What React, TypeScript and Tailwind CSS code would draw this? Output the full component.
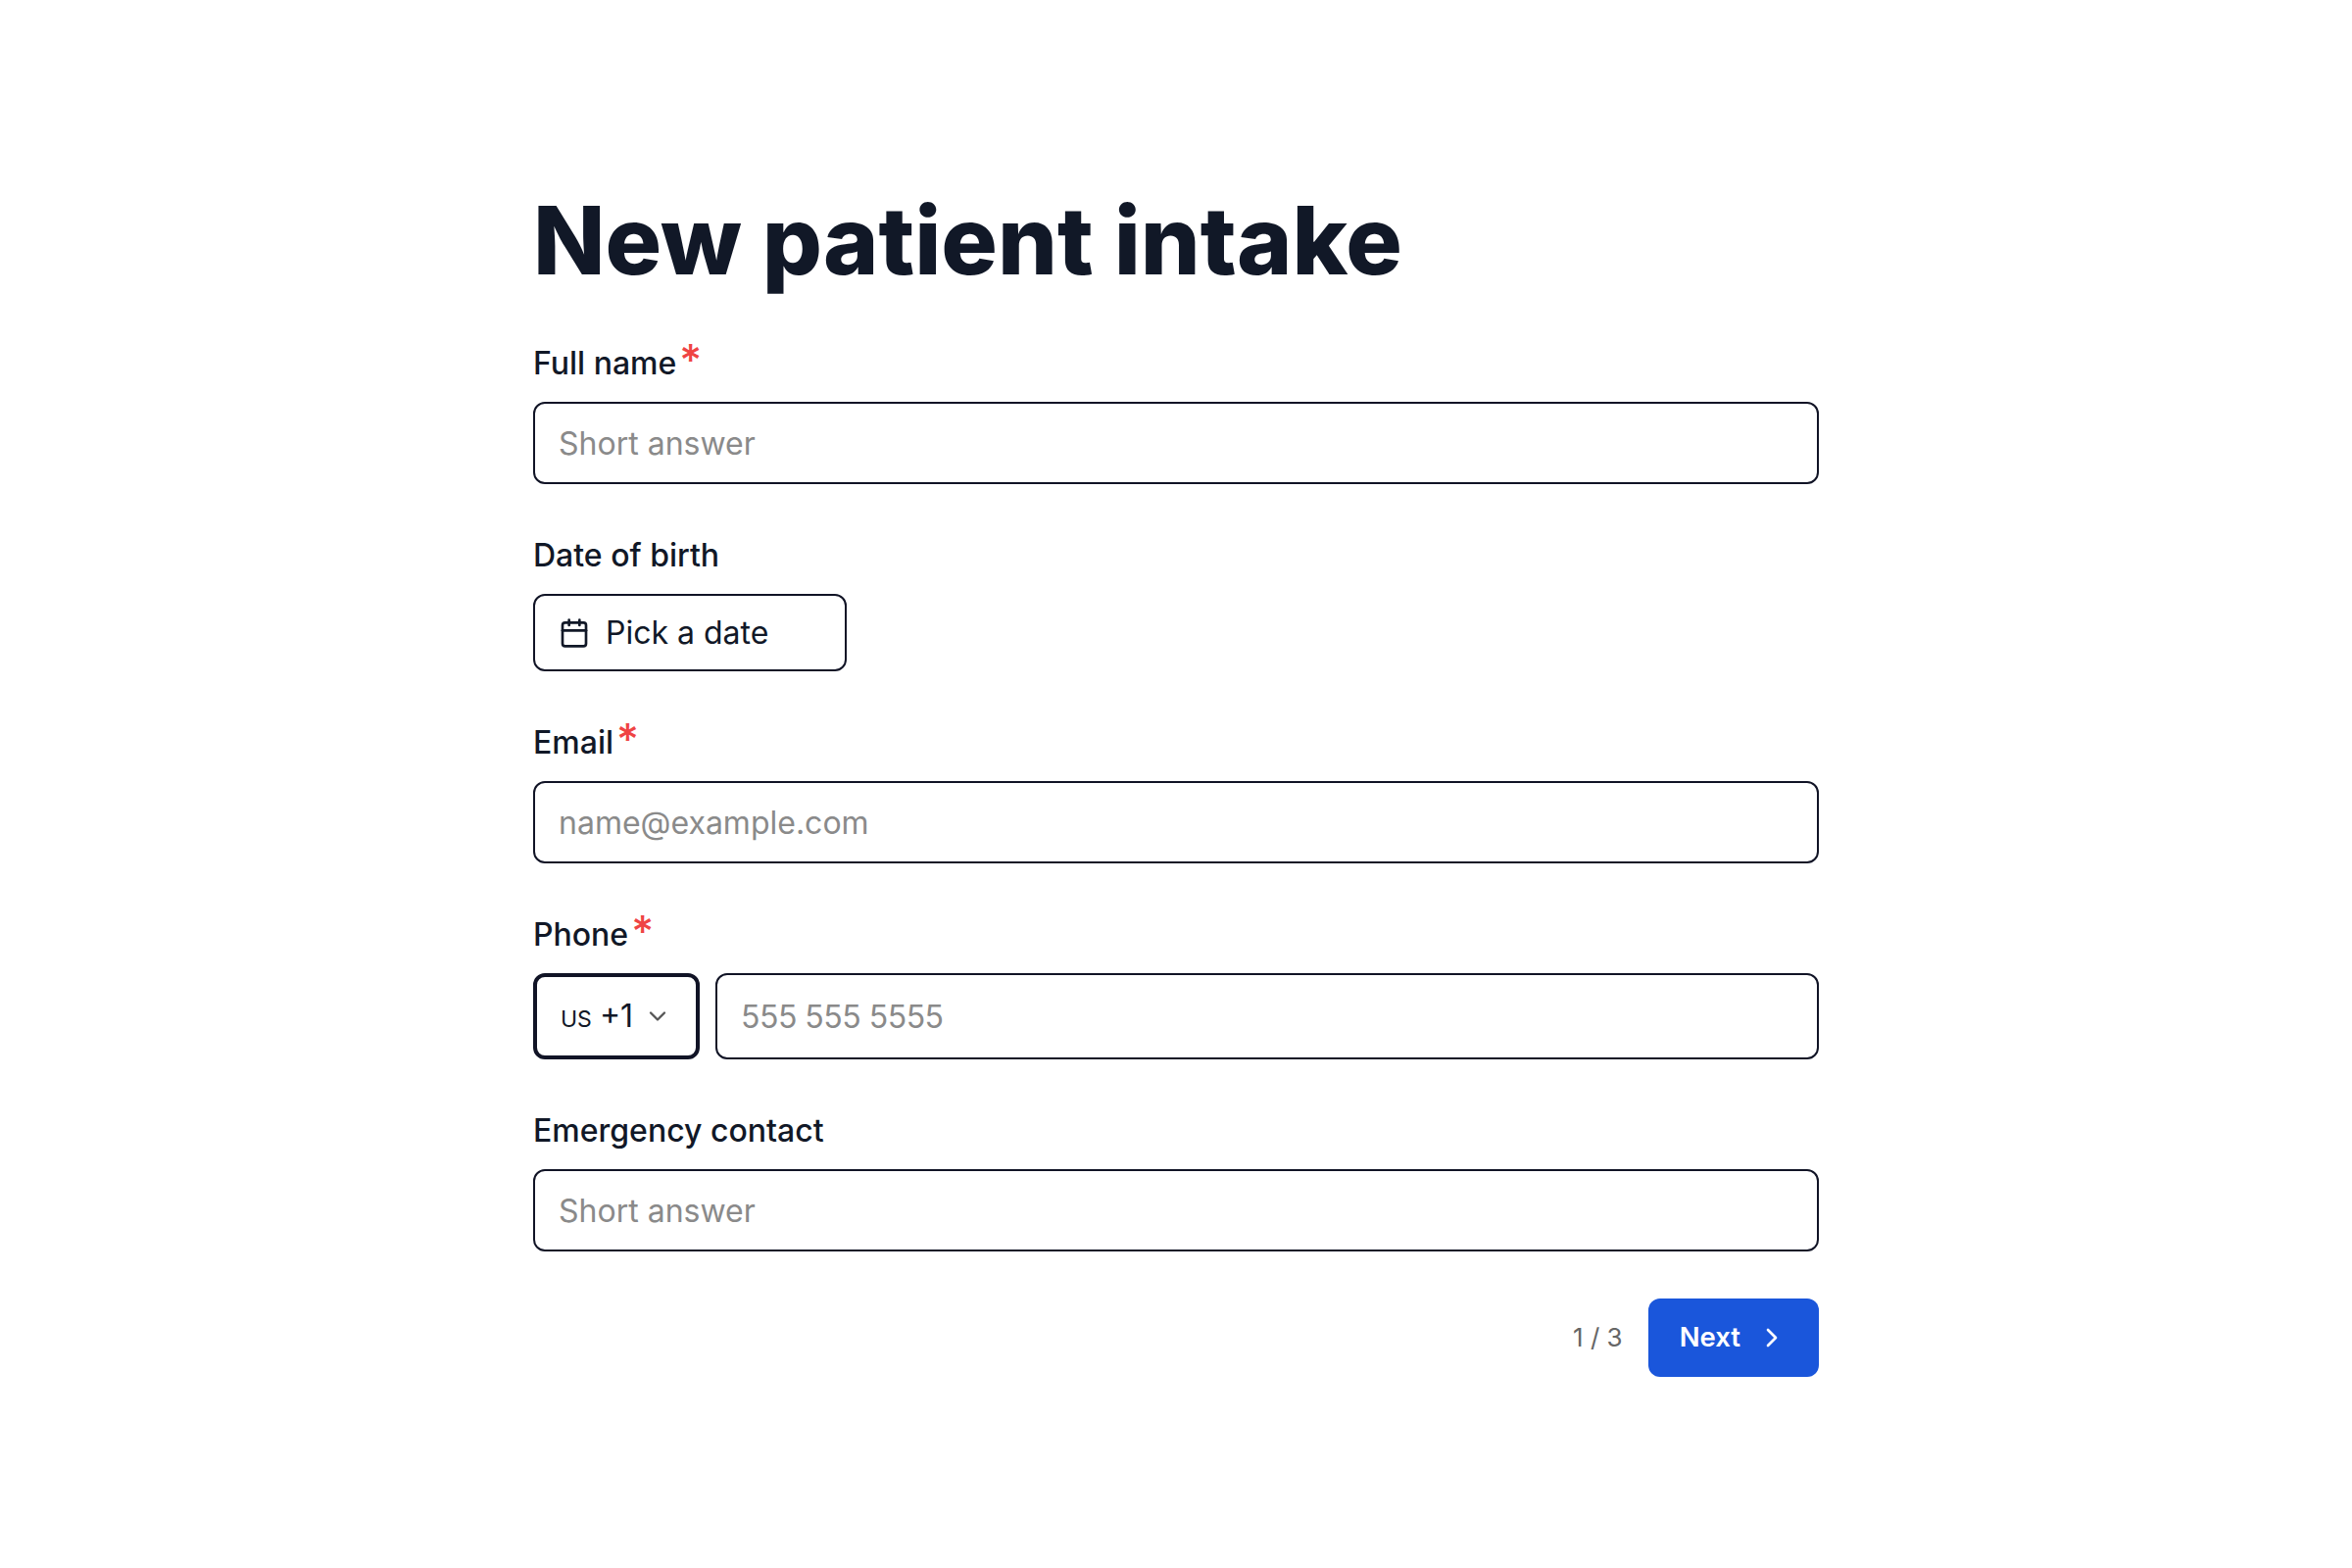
import { Calendar, ChevronDown, ChevronRight } from 'lucide-react';

const inputClass =
  'w-full h-[84px] px-[24px] rounded-xl border-2 border-[#111426] bg-white text-[32px] text-[#111827] outline-none placeholder:text-[#8a8a8a]';

function Label({ text, required }: { text: string; required?: boolean }) {
  return (
    <label className="flex items-start h-12 mb-4 text-[32px] leading-[50px] font-medium text-[#111827]">
      {text}
      {required && (
        <span className="ml-[3px] text-[44px] leading-[42px] font-medium text-[#ef4444]">*</span>
      )}
    </label>
  );
}

export default function App() {
  return (
    <div className="min-h-screen bg-white flex items-center justify-center font-['Inter',sans-serif]">
      <form className="w-[1312px] pb-px flex flex-col">
        <h1 className="mb-[50px] text-[96px] leading-[102px] font-extrabold text-[#111827]">
          New patient intake
        </h1>

        <div className="flex flex-col gap-12">
          <div>
            <Label text="Full name" required />
            <input className={inputClass} placeholder="Short answer" />
          </div>

          <div>
            <Label text="Date of birth" />
            <button
              type="button"
              className="w-[320px] h-[79px] px-[24px] flex items-center gap-4 rounded-xl border-2 border-[#111426] text-[32px] text-[#111827]"
            >
              <Calendar className="w-8 h-8" />
              Pick a date
            </button>
          </div>

          <div>
            <Label text="Email" required />
            <input className={inputClass} placeholder="name@example.com" />
          </div>

          <div>
            <Label text="Phone" required />
            <div className="flex gap-4">
              <button
                type="button"
                className="w-[170px] h-[88px] shrink-0 pl-[24px] flex items-center rounded-xl border-4 border-[#111426] text-[32px] text-[#111827]"
              >
                <span>
                  <span className="mr-[-1px] text-[23px]">US</span> +1
                </span>
                <ChevronDown className="ml-[11px] w-7 h-7 text-[#555]" />
              </button>
              <input
                className={inputClass + ' h-[88px] tracking-[-0.5px]'}
                placeholder="555 555 5555"
              />
            </div>
          </div>

          <div>
            <Label text="Emergency contact" />
            <input className={inputClass} placeholder="Short answer" />
          </div>

          <div className="flex items-center justify-end gap-[26px]">
            <span className="mb-[2px] text-[26px] text-[#666]">1 / 3</span>
            <button
              type="button"
              className="h-20 px-8 flex items-center gap-4 rounded-xl bg-[#1a56db] text-[27.5px] font-semibold text-white"
            >
              Next
              <ChevronRight className="w-8 h-8" />
            </button>
          </div>
        </div>
      </form>
    </div>
  );
}
